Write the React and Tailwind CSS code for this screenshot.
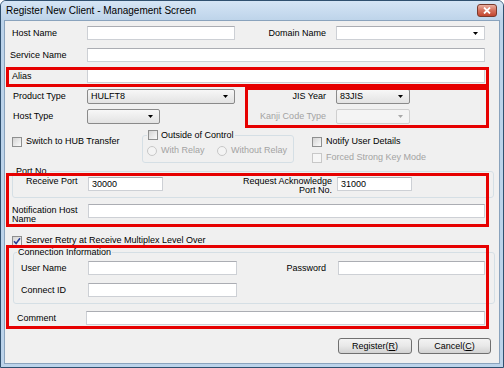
import React from "react";

// Vista-style "Register New Client" dialog with red annotation boxes

function TextBox({ className = "", value }) {
  return (
    <div
      className={`h-[14px] shrink-0 bg-white border border-[#cdd0d5] border-t-[#abadb3] flex items-center pl-[3px] ${className}`}
    >
      {value}
    </div>
  );
}

function Arrow({ off }) {
  return (
    <svg width="5" height="3" viewBox="0 0 5 3" className="shrink-0">
      <polygon points="0,0 5,0 2.5,3" fill={off ? "#a8a8a8" : "#000"} />
    </svg>
  );
}

function Combo({ className = "", value, kind = "list" }) {
  const look = {
    list: "border-[#8a8a8a] rounded-[2px] bg-linear-to-b from-[#f7f7f7] to-[#e3e3e3]",
    edit: "border-[#cdd0d5] border-t-[#abadb3] bg-white",
    off: "border-[#cfcfcf] rounded-[2px] bg-[#f4f4f4]",
  }[kind];
  return (
    <div
      className={`shrink-0 border flex items-center justify-between pl-[3px] pr-[6px] ${look} ${className}`}
    >
      <span>{value}</span>
      <Arrow off={kind === "off"} />
    </div>
  );
}

function Check({ checked, off }) {
  return (
    <span
      className={`w-[10px] h-[10px] shrink-0 border flex items-center justify-center ${
        off
          ? "border-[#c8c8c8] bg-[#f6f6f6]"
          : "border-[#8e8f8f] bg-linear-to-br from-[#d4d4d4] to-[#fbfbfb]"
      }`}
    >
      {checked && (
        <svg width="8" height="8" viewBox="0 0 8 8">
          <path d="M1 4.2 L3.1 6.5 L7 1.2" fill="none" stroke="#2b4193" strokeWidth="1.6" />
        </svg>
      )}
    </span>
  );
}

function Radio() {
  return (
    <span className="w-[10px] h-[10px] shrink-0 rounded-full border border-[#c8c8c8] bg-[#f4f4f4]" />
  );
}

function Button({ className = "", children }) {
  return (
    <div
      className={`h-[16px] shrink-0 border border-[#707070] rounded-[3px] bg-linear-to-b from-[#f3f3f3] via-[#e8e8e8] to-[#d2d2d2] flex items-center justify-center ${className}`}
    >
      {children}
    </div>
  );
}

export default function App() {
  const dim = "text-[#a3a3a3]";
  const red = "absolute border-[3px] border-[#e60000] pointer-events-none";

  return (
    <div className="w-[504px] h-[368px] border border-[#30506f] rounded-t-[6px] overflow-hidden bg-[#bcd3ea] flex flex-col font-['Liberation_Sans',Arial,sans-serif] text-[9px] leading-[11px] text-black">
      {/* Title bar */}
      <div className="h-[19px] shrink-0 flex items-center justify-between pl-[5px] pr-[6px] bg-linear-to-b from-[#d5e5f5] to-[#bed4ea]">
        <span className="text-[10px]">Register New Client - Management Screen</span>
        <div className="w-[20px] h-[13px] rounded-[3px] border border-[#7a3a2c] bg-linear-to-b from-[#eab0a2] via-[#d5705c] to-[#c2452e] flex items-center justify-center">
          <svg width="8" height="7" viewBox="0 0 8 7">
            <path d="M1 0.5 L7 6.5 M7 0.5 L1 6.5" stroke="#fff" strokeWidth="1.8" />
          </svg>
        </div>
      </div>

      {/* Dialog body */}
      <div className="relative flex-1 mx-[3px] mb-[3px] border border-[#8aa3bd] bg-[#f0f0f0] flex flex-col">
        <div className="mt-[5px] h-[14px] flex items-center">
          <div className="w-[82px] pl-[7px]">Host Name</div>
          <TextBox className="w-[148px]" />
          <div className="w-[91px] text-right">Domain Name</div>
          <Combo kind="edit" className="ml-[10px] w-[149px] h-[14px]" />
        </div>

        <div className="mt-[8px] h-[14px] flex items-center">
          <div className="w-[82px] pl-[5px]">Service Name</div>
          <TextBox className="w-[398px]" />
        </div>

        <div className="mt-[7px] h-[14px] flex items-center">
          <div className="w-[82px] pl-[7px]">Alias</div>
          <TextBox className="w-[398px]" />
        </div>

        <div className="mt-[6px] h-[15px] flex items-center">
          <div className="w-[82px] pl-[8px]">Product Type</div>
          <Combo className="w-[148px] h-[15px]" value="HULFT8" />
          <div className="w-[91px] text-right">JIS Year</div>
          <Combo className="ml-[10px] w-[74px] h-[15px]" value="83JIS" />
        </div>

        <div className="mt-[5px] h-[15px] flex items-center">
          <div className="w-[82px] pl-[8px]">Host Type</div>
          <div className="w-[148px]">
            <Combo className="w-[73px] h-[15px]" />
          </div>
          <div className={`w-[91px] text-right ${dim}`}>Kanji Code Type</div>
          <Combo kind="off" className="ml-[10px] w-[74px] h-[15px]" />
        </div>

        {/* Transfer options */}
        <div className="mt-[5px] flex items-start">
          <div className="w-[137px] pl-[7px] mt-[7px] h-[11px] flex items-center gap-[4px]">
            <Check />
            Switch to HUB Transfer
          </div>
          <fieldset className="w-[152px] border border-[#d5dfe5] rounded-[3px] px-[4px] pt-[4px] pb-[6px]">
            <legend className="h-[12px] px-[1px] flex items-center gap-[3px]">
              <Check />
              Outside of Control
            </legend>
            <div className={`h-[11px] flex items-center ${dim}`}>
              <div className="w-[70px] flex items-center gap-[4px]">
                <Radio />
                With Relay
              </div>
              <div className="flex items-center gap-[4px]">
                <Radio />
                Without Relay
              </div>
            </div>
          </fieldset>
          <div className="ml-[18px] mt-[7px] flex flex-col gap-[5px]">
            <div className="h-[11px] flex items-center gap-[4px]">
              <Check />
              Notify User Details
            </div>
            <div className={`h-[11px] flex items-center gap-[4px] ${dim}`}>
              <Check off />
              Forced Strong Key Mode
            </div>
          </div>
        </div>

        {/* Port No. */}
        <fieldset className="mt-[2px] ml-[7px] w-[482px] border border-[#d5dfe5] rounded-[3px] px-[2px] pb-[3px]">
          <legend className="h-[12px] leading-[12px] px-[1px]">Port No.</legend>
          <div className="h-[17px] flex items-start">
            <div className="w-[73px] pl-[11px] leading-[9px]">Receive Port</div>
            <TextBox className="w-[75px]" value="30000" />
            <div className="w-[169px] text-right leading-[9px]">
              Request Acknowledge
              <br />
              Port No.
            </div>
            <TextBox className="ml-[5px] w-[75px]" value="31000" />
          </div>
        </fieldset>

        <div className="mt-[6px] h-[20px] flex items-start">
          <div className="w-[83px] pl-[7px] pt-[2px] leading-[9px]">
            Notification Host
            <br />
            Name
          </div>
          <TextBox className="w-[397px]" />
        </div>

        <div className="mt-[11px] h-[11px] pl-[7px] flex items-center gap-[4px]">
          <Check checked />
          Server Retry at Receive Multiplex Level Over
        </div>

        {/* Connection Information */}
        <fieldset className="ml-[8px] w-[482px] border border-[#d5dfe5] rounded-[3px] pl-[3px] pt-[3px] pb-[6px]">
          <legend className="h-[12px] leading-[12px] px-[1px]">Connection Information</legend>
          <div className="h-[14px] flex items-center">
            <div className="w-[71px] pl-[4px]">User Name</div>
            <TextBox className="w-[149px]" />
            <div className="w-[89px] text-right">Password</div>
            <TextBox className="ml-[12px] w-[147px]" />
          </div>
          <div className="mt-[8px] h-[14px] flex items-center">
            <div className="w-[71px] pl-[4px]">Connect ID</div>
            <TextBox className="w-[149px]" />
          </div>
        </fieldset>

        <div className="mt-[7px] h-[14px] flex items-center">
          <div className="w-[81px] pl-[12px]">Comment</div>
          <TextBox className="w-[399px]" />
        </div>

        <div className="mt-[13px] flex justify-end gap-[6px] pr-[8px]">
          <Button className="w-[74px]">
            Register(<span className="underline">R</span>)
          </Button>
          <Button className="w-[73px]">
            Cancel(<span className="underline">C</span>)
          </Button>
        </div>

        {/* Red annotation boxes drawn over the form */}
        <div className={`${red} left-[1px] top-[46px] w-[483px] h-[20px]`} />
        <div className={`${red} left-[240px] top-[66px] w-[244px] h-[41px]`} />
        <div className={`${red} left-[1px] top-[152px] w-[483px] h-[54px]`} />
        <div className={`${red} left-[1px] top-[224px] w-[483px] h-[84px]`} />
      </div>
    </div>
  );
}
